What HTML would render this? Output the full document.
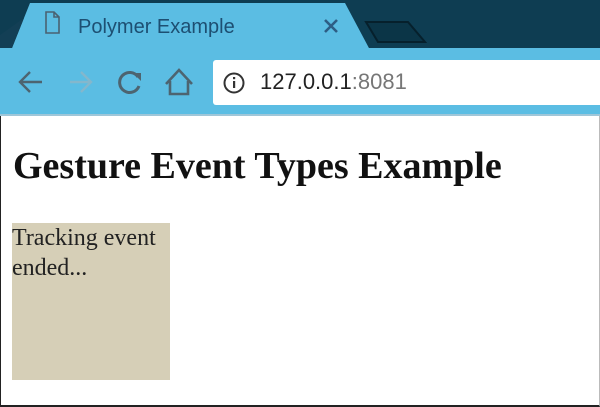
<!DOCTYPE html>
<html><head><style>
body{margin:0;width:600px;height:407px;overflow:hidden;position:relative;background:#fff;font-family:"Liberation Serif",serif}
.top{position:absolute;left:0;top:0;width:600px;height:50px;background:#0e3d52}
.tab{position:absolute;left:0;top:0;width:600px;height:50px}
.tool{position:absolute;left:0;top:48px;width:600px;height:66px;background:#5bbde3}
.line{position:absolute;left:0;top:114px;width:600px;height:2px;background:#9fc6d8}
.addr{position:absolute;left:213px;top:60px;width:390px;height:45px;background:#fff;border-radius:3px 0 0 3px}
.frame{position:absolute;left:0;top:116px;width:598px;height:289px;border-left:1px solid #222;border-bottom:2px solid #222;border-right:1px solid #bbb}
h1{position:absolute;left:13px;top:144px;margin:0;font-size:38px;font-weight:bold;color:#111;white-space:nowrap}
.box{position:absolute;left:12px;top:223px;width:158px;height:157px;background:#d6cfb7;font-size:24px;line-height:30px;color:#222;white-space:nowrap}
</style></head><body>
<div class="top"></div>
<svg class="tab" width="600" height="50">
<path d="M0 50 L0 48 L12 48 L30 3 L345 3 L370 50 Z" fill="#5bbde3"/>
<path d="M0 48 L12 48 L24 18 L0 35Z" fill="#133f55"/>
<path d="M366 22 L408 22 L425 42 L378 42 Z" fill="#0b3547" stroke="#06202c" stroke-width="2"/>
<path d="M46 12 L54 12 L59 17 L59 33 L46 33 Z M54 12 L54 17 L59 17" fill="none" stroke="#4a6272" stroke-width="1.6"/>
<text x="78" y="33" font-family="Liberation Sans,sans-serif" font-size="20" fill="#1d4f72">Polymer Example</text>
<path d="M325 20 L337 32 M337 20 L325 32" stroke="#2d5d84" stroke-width="2.6"/>
</svg>
<div class="tool"></div>
<svg style="position:absolute;left:0;top:48px" width="213" height="66">
<path d="M20 34 L42 34 M30 24 L20 34 L30 44" fill="none" stroke="#4d6470" stroke-width="2.4"/>
<path d="M70 34 L91 34 M81 24 L91 34 L81 44" fill="none" stroke="#84b7cc" stroke-width="2.4"/>
<path d="M138 29 A10 10 0 1 0 139 38" fill="none" stroke="#4d6470" stroke-width="3"/>
<path d="M133 25 L141 25 L141 33 Z" fill="#4d6470"/>
<path d="M166 36 L179 22 L192 36 M170 33 L170 46 L188 46 L188 33" fill="none" stroke="#4d6470" stroke-width="2.6"/>
</svg>
<div class="addr"></div>
<svg style="position:absolute;left:222px;top:71px" width="24" height="24"><circle cx="12" cy="12" r="9.5" fill="none" stroke="#333" stroke-width="2"/><rect x="11" y="10" width="2.2" height="7" fill="#333"/><rect x="11" y="6" width="2.2" height="2.2" fill="#333"/></svg>
<div style="position:absolute;left:260px;top:69px;font-family:'Liberation Sans',sans-serif;font-size:22px;color:#222">127.0.0.1<span style="color:#777">:8081</span></div>
<div class="line"></div>
<div class="frame"></div>
<h1>Gesture Event Types Example</h1>
<div class="box">Tracking event<br>ended...</div>
</body></html>
